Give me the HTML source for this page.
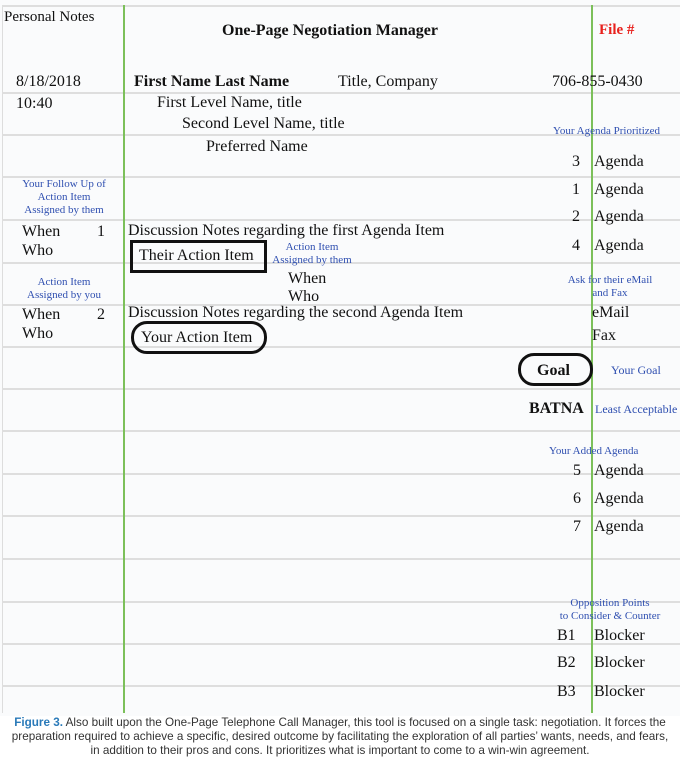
<!DOCTYPE html>
<html><head><meta charset="utf-8"><style>
body{margin:0;width:680px;height:758px;background:#fff;position:relative;overflow:hidden;font-family:"Liberation Serif",serif;color:#111}
.p{position:absolute;white-space:nowrap;line-height:1;transform:translateY(1px)}
.h{position:absolute;left:2px;width:678px;height:2px;background:#dedede}
.g{position:absolute;top:5px;width:1.5px;height:708px;background:#7cc05a}
.b{color:#2f4fb0;font-size:11px;text-align:center;line-height:13px}
.t{font-size:16px}
</style></head><body>
<div style="position:absolute;left:0;top:0;width:680px;height:716px;background:#fafbfc"></div>
<div style="position:absolute;left:2px;top:5px;width:1px;height:708px;background:#ddd"></div>
<div class="h" style="top:5px"></div>
<div class="h" style="top:92px"></div><div class="h" style="top:134px"></div><div class="h" style="top:176px"></div>
<div class="h" style="top:219px"></div><div class="h" style="top:262px"></div><div class="h" style="top:304px"></div>
<div class="h" style="top:346px"></div><div class="h" style="top:388px"></div><div class="h" style="top:430px"></div>
<div class="h" style="top:473px"></div><div class="h" style="top:515px"></div><div class="h" style="top:558px"></div>
<div class="h" style="top:601px"></div><div class="h" style="top:643px"></div><div class="h" style="top:685px"></div>
<div class="g" style="left:123px"></div><div class="g" style="left:591px"></div>

<div class="p" style="left:4px;top:9px;font-size:15px">Personal Notes</div>
<div class="p" style="left:222px;top:22px;font-size:16px;font-weight:bold">One-Page Negotiation Manager</div>
<div class="p" style="left:599px;top:22px;font-size:15px;font-weight:bold;color:#e8201c">File #</div>
<div class="p t" style="left:16px;top:73px">8/18/2018</div>
<div class="p t" style="left:134px;top:73px;font-weight:bold">First Name Last Name</div>
<div class="p t" style="left:338px;top:73px">Title, Company</div>
<div class="p t" style="left:552px;top:73px">706-855-0430</div>
<div class="p t" style="left:16px;top:95px">10:40</div>
<div class="p t" style="left:157px;top:94px">First Level Name, title</div>
<div class="p t" style="left:182px;top:115px">Second Level Name, title</div>
<div class="p t" style="left:206px;top:138px">Preferred Name</div>
<div class="p b" style="left:553px;top:124px">Your Agenda Prioritized</div>
<div class="p t" style="left:572px;top:153px">3</div><div class="p t" style="left:594px;top:153px">Agenda</div>
<div class="p t" style="left:572px;top:181px">1</div><div class="p t" style="left:594px;top:181px">Agenda</div>
<div class="p t" style="left:572px;top:208px">2</div><div class="p t" style="left:594px;top:208px">Agenda</div>
<div class="p t" style="left:572px;top:237px">4</div><div class="p t" style="left:594px;top:237px">Agenda</div>
<div class="p b" style="left:4px;width:120px;top:177px">Your Follow Up of<br>Action Item<br>Assigned by them</div>
<div class="p t" style="left:22px;top:223px">When</div><div class="p t" style="left:97px;top:223px">1</div>
<div class="p t" style="left:22px;top:242px">Who</div>
<div class="p t" style="left:128px;top:222px">Discussion Notes regarding the first Agenda Item</div>
<div style="position:absolute;left:130px;top:240px;width:131px;height:27px;border:3px solid #111"></div>
<div class="p t" style="left:139px;top:247px">Their Action Item</div>
<div class="p b" style="left:262px;width:100px;top:240px">Action Item<br>Assigned by them</div>
<div class="p t" style="left:288px;top:270px">When</div><div class="p t" style="left:288px;top:288px">Who</div>
<div class="p b" style="left:550px;width:120px;top:273px">Ask for their eMail<br>and Fax</div>
<div class="p b" style="left:4px;width:120px;top:275px">Action Item<br>Assigned by you</div>
<div class="p t" style="left:22px;top:306px">When</div><div class="p t" style="left:97px;top:306px">2</div>
<div class="p t" style="left:22px;top:325px">Who</div>
<div class="p t" style="left:128px;top:304px">Discussion Notes regarding the second Agenda Item</div>
<div style="position:absolute;left:131px;top:321px;width:130px;height:27px;border:3px solid #111;border-radius:16px"></div>
<div class="p t" style="left:141px;top:329px">Your Action Item</div>
<div class="p t" style="left:592px;top:304px">eMail</div><div class="p t" style="left:592px;top:327px">Fax</div>
<div style="position:absolute;left:518px;top:353px;width:69px;height:27px;border:3px solid #111;border-radius:16px"></div>
<div class="p t" style="left:537px;top:362px;font-weight:bold">Goal</div>
<div class="p b" style="left:611px;top:363px;font-size:12px">Your Goal</div>
<div class="p t" style="left:529px;top:400px;font-weight:bold">BATNA</div>
<div class="p b" style="left:595px;top:402px;font-size:12px">Least Acceptable</div>
<div class="p b" style="left:549px;top:444px">Your Added Agenda</div>
<div class="p t" style="left:573px;top:462px">5</div><div class="p t" style="left:594px;top:462px">Agenda</div>
<div class="p t" style="left:573px;top:490px">6</div><div class="p t" style="left:594px;top:490px">Agenda</div>
<div class="p t" style="left:573px;top:518px">7</div><div class="p t" style="left:594px;top:518px">Agenda</div>
<div class="p b" style="left:550px;width:120px;top:596px">Opposition Points<br>to Consider &amp; Counter</div>
<div class="p t" style="left:557px;top:627px">B1</div><div class="p t" style="left:594px;top:627px">Blocker</div>
<div class="p t" style="left:557px;top:654px">B2</div><div class="p t" style="left:594px;top:654px">Blocker</div>
<div class="p t" style="left:557px;top:683px">B3</div><div class="p t" style="left:594px;top:683px">Blocker</div>
<div style="position:absolute;left:0;top:716px;width:680px;text-align:center;font-family:'Liberation Sans',sans-serif;font-size:11.7px;line-height:14px;color:#333;white-space:nowrap"><span style="color:#2a7ab9;font-weight:bold">Figure 3.</span> Also built upon the One-Page Telephone Call Manager, this tool is focused on a single task: negotiation. It forces the<br>preparation required to achieve a specific, desired outcome by facilitating the exploration of all parties’ wants, needs, and fears,<br>in addition to their pros and cons. It prioritizes what is important to come to a win-win agreement.</div>
</body></html>
